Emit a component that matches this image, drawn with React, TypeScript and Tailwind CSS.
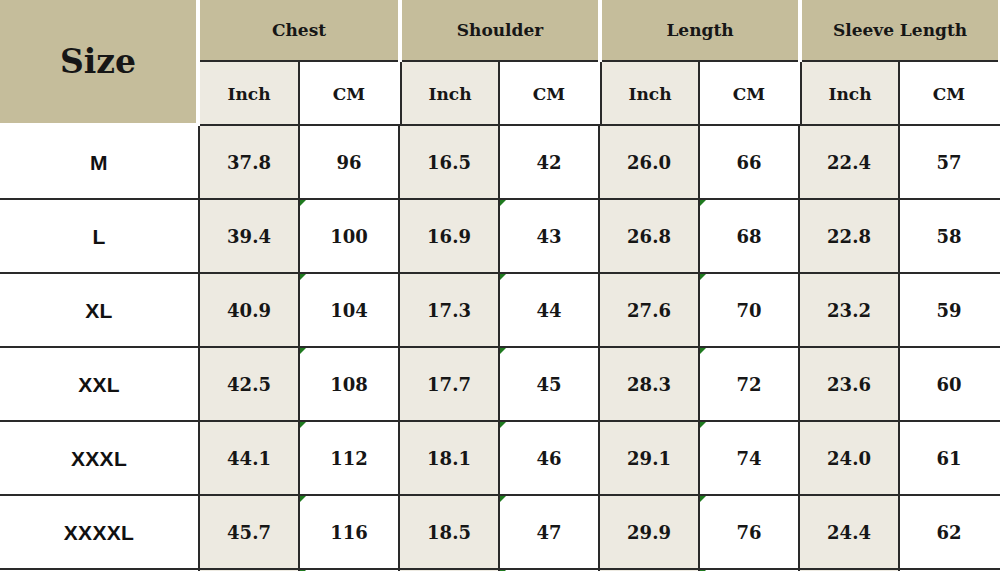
import React from "react";

const groups = ["Chest", "Shoulder", "Length", "Sleeve Length"];

const rows: [string, string[]][] = [
  ["M", ["37.8", "96", "16.5", "42", "26.0", "66", "22.4", "57"]],
  ["L", ["39.4", "100", "16.9", "43", "26.8", "68", "22.8", "58"]],
  ["XL", ["40.9", "104", "17.3", "44", "27.6", "70", "23.2", "59"]],
  ["XXL", ["42.5", "108", "17.7", "45", "28.3", "72", "23.6", "60"]],
  ["XXXL", ["44.1", "112", "18.1", "46", "29.1", "74", "24.0", "61"]],
  ["XXXXL", ["45.7", "116", "18.5", "47", "29.9", "76", "24.4", "62"]],
];

const serif = "font-['DejaVu_Serif',serif] font-bold text-[#161616]";

function Mark() {
  // little green corner flag, like the spreadsheet cell note
  return (
    <span className="absolute left-0 top-0 w-0 h-0 border-t-[6px] border-r-[6px] border-t-[#1f7a1f] border-r-transparent" />
  );
}

export default function App() {
  return (
    <div className="w-[1000px] h-[571px] bg-white overflow-hidden">
      {/* header */}
      <div className="flex h-[126px]">
        <div className="w-[196px] h-[123px] bg-[#c5bd9b] flex items-center justify-center">
          <span className={`${serif} text-[33px] leading-none`}>Size</span>
        </div>
        <div className="w-[4px]" />
        {groups.map((g, gi) => (
          <div key={g} className="w-[200px] flex flex-col">
            <div className="h-[62px] flex">
              <div className={`flex-1 bg-[#c5bd9b] border-b-2 border-[#2a2a2a] flex items-center justify-center ${gi > 0 ? "ml-[2px]" : ""} mr-[2px]`}>
                <span className={`${serif} text-[17px] leading-none`}>{g}</span>
              </div>
            </div>
            <div className="h-[64px] flex border-b-2 border-[#2a2a2a]">
              <div className={`w-[98px] bg-[#edeae1] flex items-center justify-center ${gi > 0 ? "border-l-2 border-[#2a2a2a]" : ""}`}>
                <span className={`${serif} text-[17px] leading-none mt-[2px]`}>Inch</span>
              </div>
              <div className="w-[100px] bg-white border-l-2 border-[#2a2a2a] flex items-center justify-center">
                <span className={`${serif} text-[17px] leading-none mt-[2px]`}>CM</span>
              </div>
            </div>
          </div>
        ))}
      </div>

      {/* body */}
      {rows.map(([size, vals], ri) => (
        <div key={size} className="flex h-[74px] border-b-2 border-[#2a2a2a]">
          <div className="w-[198px] flex items-center justify-center">
            <span className="font-['Liberation_Sans',sans-serif] font-bold text-[21px] text-[#111] leading-none tracking-[0.3px]">{size}</span>
          </div>
          {vals.map((v, vi) => (
            <div
              key={vi}
              className={`relative w-[100px] border-l-2 border-[#2a2a2a] flex items-center justify-center ${vi % 2 === 0 ? "bg-[#edeae1]" : "bg-white"}`}
            >
              {ri > 0 && vi % 2 === 1 && vi < 6 && <Mark />}
              <span className={`${serif} text-[18px] leading-none mt-[2px]`}>{v}</span>
            </div>
          ))}
        </div>
      ))}
      <div className="flex h-[3px]">
        <div className="w-[198px]" />
        {[0, 1, 2, 3, 4, 5, 6, 7].map((i) => (
          <div key={i} className={`relative w-[100px] border-l-2 border-[#2a2a2a] ${i % 2 === 0 ? "bg-[#edeae1]" : "bg-white"}`}>
            {i % 2 === 1 && i < 6 && <Mark />}
          </div>
        ))}
      </div>
    </div>
  );
}
